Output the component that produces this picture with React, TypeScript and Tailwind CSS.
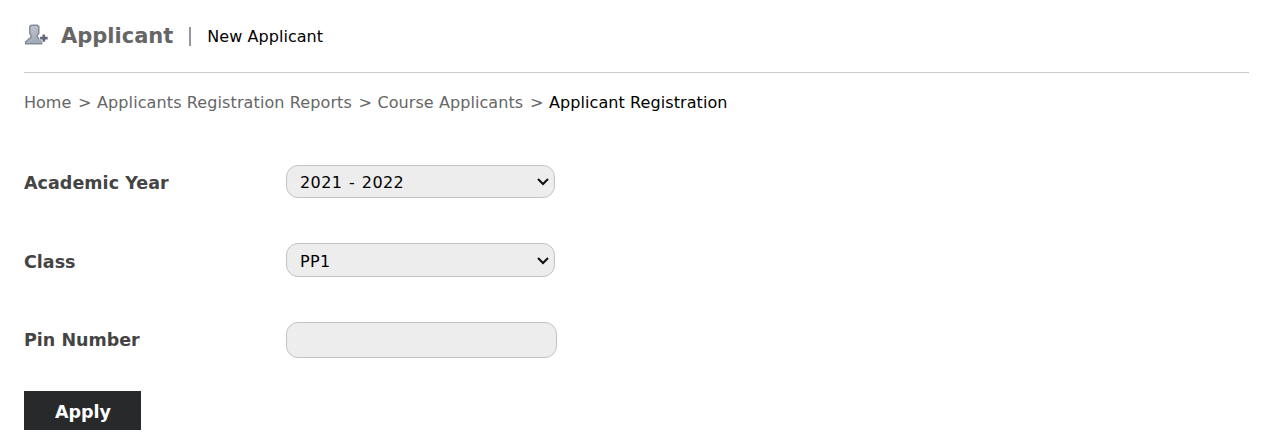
import type { ReactNode } from "react";

function ApplicantIcon() {
  return (
    <svg width="26" height="24" viewBox="0 0 26 24" className="block">
      <defs>
        <linearGradient id="person" x1="0" y1="0" x2="0.4" y2="1">
          <stop offset="0" stopColor="#c6c9d2" />
          <stop offset="1" stopColor="#a0a8ba" />
        </linearGradient>
      </defs>
      <path
        d="M7.2 1.2 H13.4 L14.8 2.6 V9.4 L13.4 11.4 V13.2 L17.8 17.2 V19.8 H1.6 V17.8 L7 13.2 V11.4 L5.8 9.4 V2.6 Z"
        fill="url(#person)"
        stroke="#858a98"
        strokeWidth="1.5"
        strokeLinejoin="round"
      />
      <path d="M19.8 9.8 V18.4 M15.6 14.1 H24" stroke="#ffffff" strokeWidth="4.2" />
      <path d="M19.8 10.4 V17.8 M16.1 14.1 H23.6" stroke="#62667a" strokeWidth="2.6" />
    </svg>
  );
}

function Row({ label, className, labelClassName, children }: { label: string; className: string; labelClassName: string; children: ReactNode }) {
  return (
    <div className={`flex items-center ${className}`}>
      <span className={`w-[262px] text-[17.5px] font-bold text-[#444444] ${labelClassName}`}>{label}</span>
      {children}
    </div>
  );
}

function SelectBox({ value, className }: { value: string; className: string }) {
  return (
    <button
      type="button"
      className={`flex w-[269px] items-center justify-between rounded-[12px] border border-[#c3c3c3] bg-[#ededed] pr-[5px] pl-[13px] text-[16px] text-black ${className}`}
    >
      <span className="pt-[2px] tracking-[0.4px] [word-spacing:1.2px]">{value}</span>
      <svg width="12" height="8" viewBox="0 0 12 8" fill="none">
        <path d="M1 1 L6 6 L11 1" stroke="#101010" strokeWidth="2" />
      </svg>
    </button>
  );
}

export default function App() {
  return (
    <main className="h-[446px] w-full bg-white px-[24px] font-['Verdana','DejaVu_Sans',sans-serif] text-[16px] whitespace-nowrap">
      <header className="mr-[-7px] flex h-[73px] items-center border-b border-[#cacaca]">
        <ApplicantIcon />
        <h1 className="ml-[11px] pt-px text-[21px] font-bold text-[#666666]">Applicant</h1>
        <span className="ml-[16px] h-[19px] w-[2px] bg-[#9398a0]" />
        <span className="ml-[16px] pt-[2px] tracking-[0.05px] text-black">New Applicant</span>
      </header>
      <nav className="flex h-[59px] items-center text-[#666666]">
        <span className="w-[54px]">Home</span>
        <span className="w-[19px]">&gt;</span>
        <span className="w-[261.5px] tracking-[0.11px]">Applicants Registration Reports</span>
        <span className="w-[19px]">&gt;</span>
        <span className="w-[152.5px] tracking-[0.07px]">Course Applicants</span>
        <span className="w-[19px]">&gt;</span>
        <span className="tracking-[0.08px] text-black">Applicant Registration</span>
      </nav>
      <form>
        <Row label="Academic Year" className="mt-[33px] h-[33px]" labelClassName="pt-[3px] tracking-[0.04px]">
          <SelectBox value="2021 - 2022" className="h-[33px]" />
        </Row>
        <Row label="Class" className="mt-[45px] h-[34px]" labelClassName="pt-[4px]">
          <SelectBox value="PP1" className="h-[34px] pt-[2px]" />
        </Row>
        <Row label="Pin Number" className="mt-[45px] h-[36px]" labelClassName="">
          <input aria-label="Pin Number" className="h-[36px] w-[271px] rounded-[12px] border border-[#c3c3c3] bg-[#ededed] px-[13px]" />
        </Row>
        <button type="button" className="mt-[33px] flex h-[39px] w-[117px] items-center justify-center bg-[#28292a] pt-[3px] pl-px text-[17.5px] font-bold text-white">
          Apply
        </button>
      </form>
    </main>
  );
}
